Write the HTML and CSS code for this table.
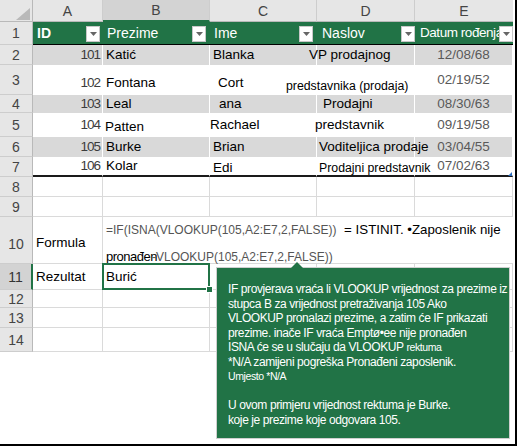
FILE: index.html
```html
<!DOCTYPE html>
<html lang="hr">
<head>
<meta charset="utf-8">
<title>VLOOKUP primjer</title>
<link rel="stylesheet" href="styles.css">
</head>
<body>
<div class="frame">
  <div class="sheet">
    <div class="corner"><svg width="33" height="22" viewBox="0 0 33 22"><polygon points="30,8 30,20 16,20" fill="#b9b9b9"/></svg></div>
    <div class="ch">A</div>
    <div class="ch sel">B</div>
    <div class="ch">C</div>
    <div class="ch">D</div>
    <div class="ch last">E</div>

    <div class="rh">1</div>
    <div class="c th"><span class="bold">ID</span><span class="dd r3"><svg width="7" height="4"><path d="M0 0h7L3.5 4z" fill="#666"/></svg></span></div>
    <div class="c th"><span>Prezime</span><span class="dd r4"><svg width="7" height="4"><path d="M0 0h7L3.5 4z" fill="#666"/></svg></span></div>
    <div class="c th"><span>Ime</span><span class="dd r4"><svg width="7" height="4"><path d="M0 0h7L3.5 4z" fill="#666"/></svg></span></div>
    <div class="c th"><span class="ml2">Naslov</span><span class="dd r0"><svg width="7" height="4"><path d="M0 0h7L3.5 4z" fill="#666"/></svg></span></div>
    <div class="c th"><span class="ml2 hdr-e">Datum rođenja</span><span class="dd r0"><svg width="7" height="4"><path d="M0 0h7L3.5 4z" fill="#666"/></svg></span></div>

    <div class="rh">2</div>
    <div class="c band id">101</div>
    <div class="c band">Katić</div>
    <div class="c band">Blanka</div>
    <div class="c band"><span class="ml-11 ov">VP prodajnog</span></div>
    <div class="c band date">12/08/68</div>

    <div class="rh">3</div>
    <div class="c plain id dn">102</div>
    <div class="c plain dn">Fontana</div>
    <div class="c plain dn"><span class="ml5">Cort</span></div>
    <div class="c plain"><span class="ml-34 small dn12 ov">predstavnika (prodaja)</span></div>
    <div class="c plain date">02/19/52</div>

    <div class="rh">4</div>
    <div class="c band id">103</div>
    <div class="c band">Leal</div>
    <div class="c band"><span class="ml6">ana</span></div>
    <div class="c band"><span class="ml3 ov">Prodajni</span></div>
    <div class="c band date">08/30/63</div>

    <div class="rh">5</div>
    <div class="c plain id">104</div>
    <div class="c plain"><span class="ml-1 dn4">Patten</span></div>
    <div class="c plain"><span class="ml-3">Rachael</span></div>
    <div class="c plain"><span class="ml-5 ov">predstavnik</span></div>
    <div class="c plain date">09/19/58</div>

    <div class="rh">6</div>
    <div class="c band id">105</div>
    <div class="c band">Burke</div>
    <div class="c band">Brian</div>
    <div class="c band"><span class="ml-1 ov">Voditeljica prodaje</span></div>
    <div class="c band date">03/04/55</div>

    <div class="rh">7</div>
    <div class="c plain end id">106</div>
    <div class="c plain end">Kolar</div>
    <div class="c plain end"><span class="dn4">Edi</span></div>
    <div class="c plain end"><span class="ml-1 small dn4 ov">Prodajni predstavnik</span></div>
    <div class="c plain end date corner-mark">07/02/63</div>

    <div class="rh">8</div>
    <div class="c g"></div><div class="c g"></div><div class="c g"></div><div class="c g"></div><div class="c g"></div>

    <div class="rh">9</div>
    <div class="c g"></div><div class="c g"></div><div class="c g"></div><div class="c g"></div><div class="c g"></div>

    <div class="rh low">10</div>
    <div class="c g low">Formula</div>
    <div class="c g span formula">
      <div class="fl1"><span class="gray">=IF(ISNA(VLOOKUP(105,A2:E7,2,FALSE))</span><span class="blk wide"> = ISTINIT. •Zaposlenik nije</span></div>
      <div class="fl2"><span class="blk tight">pronađen</span><span class="gray over">-VLOOKUP(105,A2:E7,2,FALSE))</span></div>
    </div>

    <div class="rh selrow">11</div>
    <div class="c g">Rezultat</div>
    <div class="c g active">Burić</div>
    <div class="c g"></div><div class="c g"></div><div class="c g"></div>

    <div class="rh">12</div>
    <div class="c g"></div><div class="c g"></div><div class="c g"></div><div class="c g"></div><div class="c g"></div>

    <div class="rh">13</div>
    <div class="c g"></div><div class="c g"></div><div class="c g"></div><div class="c g"></div><div class="c g"></div>

    <div class="rh">14</div>
    <div class="c g"></div><div class="c g"></div><div class="c g"></div><div class="c g"></div><div class="c g"></div>
  </div>

  <div class="tip">
    <div>IF provjerava vraća li VLOOKUP vrijednost za prezime iz</div>
    <div>stupca B za vrijednost pretraživanja 105 Ako</div>
    <div>VLOOKUP pronalazi prezime, a zatim će IF prikazati</div>
    <div>prezime. inače IF vraća Emptø•ee nije pronađen</div>
    <div>ISNA će se u slučaju da VLOOKUP <span class="sm">rektuma</span></div>
    <div>*N/A zamijeni pogreška Pronađeni zaposlenik.</div>
    <div class="sm">Umjesto *N/A</div>
    <div>&nbsp;</div>
    <div>U ovom primjeru vrijednost rektuma je Burke.</div>
    <div>koje je prezime koje odgovara 105.</div>
  </div>
</div>
</body>
</html>
```

FILE: styles.css
```css
html, body {
  margin: 0;
  padding: 0;
  background: #fff;
}

body {
  font-family: "Liberation Sans", Arial, sans-serif;
  color: #000;
}

.frame {
  position: relative;
  width: 515px;
  height: 444px;
  border-right: 2px solid #000;
  border-bottom: 2px solid #000;
  background: #fff;
}

.sheet {
  display: grid;
  grid-template-columns: 33px 70px 107px 107px 98px 98px;
  grid-template-rows: 22px 23px 20px 30px 18px 24px 20px 20px 20px 20px 47px 26px 18px 20px 24px;
  width: 513px;
}

.sheet > div {
  box-sizing: border-box;
  min-width: 0;
}

.corner {
  background: #e6e6e6;
  border-right: 1px solid #b9b9b9;
  border-bottom: 1px solid #b9b9b9;
}

.corner svg {
  display: block;
}

.ch {
  background: #e6e6e6;
  border-right: 1px solid #cdcdcd;
  border-bottom: 1px solid #b9b9b9;
  display: flex;
  align-items: center;
  justify-content: center;
  font-size: 14px;
  color: #444;
}

.ch.sel {
  background: #d3d3d3;
  border-bottom: 2px solid #217346;
}

.ch.last {
  border-right: none;
}

.rh {
  background: #e6e6e6;
  border-right: 1px solid #b9b9b9;
  border-bottom: 1px solid #cdcdcd;
  display: flex;
  align-items: center;
  justify-content: center;
  font-size: 14px;
  color: #444;
}

.rh.low {
  align-items: flex-end;
  padding-bottom: 11px;
}

.rh.selrow {
  background: #d3d3d3;
  border-right: 2px solid #217346;
  color: #333;
}

.c {
  display: flex;
  align-items: center;
  padding: 0 3px;
  font-size: 13.5px;
  line-height: 16px;
  white-space: nowrap;
}

.th {
  position: relative;
  background: #217346;
  color: #fff;
  font-size: 14px;
  border-bottom: 1px solid #000;
  padding-left: 4px;
}

.hdr-e {
  font-size: 13.5px;
  letter-spacing: -0.45px;
}

.bold {
  font-weight: bold;
}

.dd {
  position: absolute;
  top: 4px;
  width: 14px;
  height: 16px;
  box-sizing: border-box;
  background: #fff;
  border: 1px solid #c8c8c8;
  display: flex;
  align-items: center;
  justify-content: center;
}

.dd svg {
  display: block;
}

.r0 { right: 0; }
.r3 { right: 3px; }
.r4 { right: 4px; }

.band {
  background: #d9d9d9;
  border-right: 1px solid #fff;
}

.plain {
  background: #fff;
  border-right: 1px solid #fff;
}

.plain.end {
  border-bottom: 2px solid #1a1a1a;
}

.id {
  justify-content: flex-end;
  color: #3c3c3c;
  letter-spacing: -1px;
  padding-right: 2px;
}

.date {
  justify-content: center;
  color: #595959;
}

.ov {
  position: relative;
  z-index: 1;
}

.dn { padding-top: 6px; }
.dn4 { margin-top: 4px; }
.dn12 { margin-top: 12px; }

.small {
  font-size: 12.3px;
}

.ml2 { margin-left: 1px; }
.ml3 { margin-left: 3px; }
.ml5 { margin-left: 5px; }
.ml6 { margin-left: 6px; }
.ml-1 { margin-left: -1px; }
.ml-3 { margin-left: -3px; }
.ml-5 { margin-left: -5px; }
.ml-11 { margin-left: -11px; }
.ml-34 { margin-left: -34px; }

.corner-mark {
  position: relative;
}

.corner-mark::after {
  content: "";
  position: absolute;
  right: 0;
  bottom: -1px;
  width: 0;
  height: 0;
  border-left: 4px solid transparent;
  border-bottom: 4px solid #2f6fc0;
}

.g {
  border-right: 1px solid #dadada;
  border-bottom: 1px solid #dadada;
}

.low {
  align-items: flex-end;
  padding-bottom: 12px;
}

.span {
  grid-column: 3 / 7;
}

.formula {
  flex-direction: column;
  align-items: flex-start;
  justify-content: flex-start;
  padding-top: 5px;
  border-right: none;
}

.fl1, .fl2 {
  height: 16px;
  line-height: 16px;
  white-space: nowrap;
}

.fl2 {
  margin-top: 11px;
}

.gray {
  color: #555;
  font-size: 12px;
}

.blk {
  color: #000;
  font-size: 13px;
}

.blk.wide {
  font-size: 13.3px;
  margin-left: 4px;
}

.tight {
  letter-spacing: -0.5px;
}

.over {
  margin-left: -5px;
}

.active {
  position: relative;
}

.active::before {
  content: "";
  position: absolute;
  left: -1px;
  top: -1px;
  right: -1px;
  bottom: -1px;
  border: 2px solid #217346;
}

.active::after {
  content: "";
  position: absolute;
  right: -4px;
  bottom: -4px;
  width: 5px;
  height: 5px;
  background: #217346;
  border: 1px solid #fff;
}

.tip {
  position: absolute;
  z-index: 2;
  left: 217px;
  top: 268px;
  width: 292px;
  height: 170px;
  box-sizing: border-box;
  background: #217346;
  box-shadow: 0 0 0 1px #cfcfcf;
  color: #fff;
  font-size: 12px;
  letter-spacing: -0.4px;
  line-height: 14.5px;
  padding: 14px 0 0 11px;
  white-space: nowrap;
}

.tip::before {
  content: "";
  position: absolute;
  left: 74px;
  top: -6px;
  width: 0;
  height: 0;
  border-left: 6px solid transparent;
  border-right: 6px solid transparent;
  border-bottom: 6px solid #217346;
}

.sm {
  font-size: 10.5px;
}
```
